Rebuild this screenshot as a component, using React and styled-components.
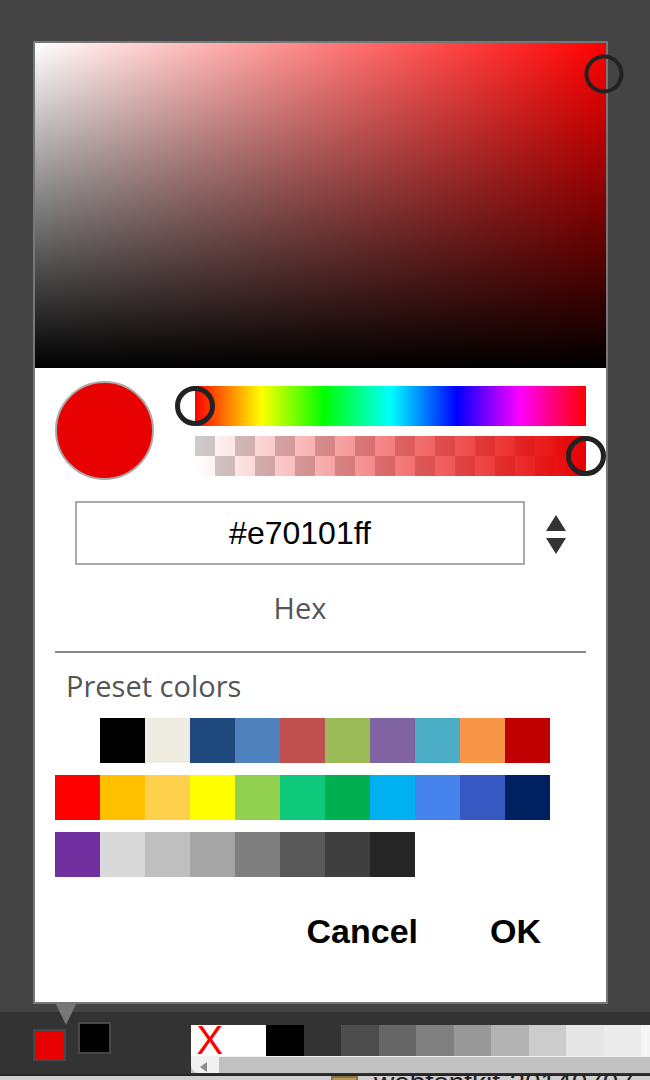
import React from "react";
import styled, { createGlobalStyle } from "styled-components";

const GlobalStyle = createGlobalStyle`
  * { box-sizing: border-box; }
  html, body { margin: 0; padding: 0; height: 100%; }
  body {
    background: #444444;
    font-family: "Liberation Sans", Arial, sans-serif;
    overflow: hidden;
  }
  #root { height: 100%; }
`;

// current colour in hsv, used to place the handles
const current = { h: 0, s: 0.996, v: 0.906, a: 1, hex: "#e70101ff", rgb: "#e70101" };

const presetColors = [
  null, "#000000", "#eeece1", "#1f497d", "#4f81bd", "#c0504d", "#9bbb59", "#8064a2", "#4bacc6", "#f79646", "#c00000",
  "#ff0000", "#ffc000", "#ffd04b", "#ffff00", "#92d050", "#0ec97b", "#00b050", "#00b0f0", "#4582ec", "#3558c3", "#002060",
  "#7030a0", "#d8d8d8", "#bfbfbf", "#a5a5a5", "#7f7f7f", "#595959", "#3f3f3f", "#262626",
];

const paletteColors = [
  "#ffffff", "#000000", "#333333", "#4d4d4d", "#666666", "#808080", "#999999",
  "#b3b3b3", "#cccccc", "#e6e6e6", "#ebebeb", "#f5f5f5",
];

const Page = styled.div`
  height: 100%;
  display: flex;
  flex-direction: column;
`;

const Stage = styled.div`
  flex: 1;
  padding: 41px 0 0 33px;
`;

const Popup = styled.div`
  position: relative;
  z-index: 2;
  width: 575px;
  height: 963px;
  background: #fff;
  border: 2px solid #777;
`;

const Pointer = styled.div`
  position: absolute;
  left: 20px;
  top: 100%;
  width: 0;
  height: 0;
  border-left: 11.5px solid transparent;
  border-right: 11.5px solid transparent;
  border-top: 23px solid #777;
`;

const SatArea = styled.div`
  position: relative;
  height: 325px;
  background: linear-gradient(to top, #000, rgba(0, 0, 0, 0)),
    linear-gradient(to right, #fff, hsl(${(p) => p.$hue}, 100%, 50%));
`;

const Ring = styled.div`
  position: absolute;
  width: ${(p) => p.$size}px;
  height: ${(p) => p.$size}px;
  border: ${(p) => p.$stroke}px solid #222;
  border-radius: 50%;
  transform: translate(-50%, -50%);
`;

const ControlsRow = styled.div`
  display: flex;
  align-items: center;
  padding: 13px 20px 0;
`;

const Preview = styled.div`
  width: 99px;
  height: 99px;
  border-radius: 50%;
  border: 2px solid #aaa;
  background: ${(p) => p.$color};
`;

const Bars = styled.div`
  margin-left: 41px;
  width: 391px;
  display: flex;
  flex-direction: column;
  gap: 10px;
`;

const HueBar = styled.div`
  position: relative;
  height: 40px;
  background: linear-gradient(to right, #f00 0%, #ff0 17%, #0f0 33%, #0ff 50%, #00f 67%, #f0f 83%, #f00 100%);
`;

const AlphaBar = styled.div`
  position: relative;
  height: 40px;
  background: linear-gradient(to right, rgba(231, 1, 1, 0), rgba(231, 1, 1, 1)),
    repeating-conic-gradient(#fff 0 25%, #cdcdcd 0 50%) 0 0 / 40px 40px;
`;

const HexRow = styled.div`
  display: flex;
  align-items: center;
  margin-top: 21px;
  padding-left: 40px;
`;

const HexInput = styled.input`
  width: 450px;
  height: 64px;
  border: 2px solid #aaa;
  outline: none;
  padding: 0;
  text-align: center;
  font-family: "Liberation Sans", Arial, sans-serif;
  font-size: 32px;
  color: #000;
  background: #fff;
`;

const Stepper = styled.div`
  margin: 3px 0 0 21px;
  display: flex;
  flex-direction: column;
  gap: 7px;
`;

const Arrow = styled.div`
  width: 0;
  height: 0;
  border-left: 10px solid transparent;
  border-right: 10px solid transparent;
  ${(p) => (p.$down ? "border-top: 16px solid #333;" : "border-bottom: 16px solid #333;")}
`;

const Label = styled.div`
  width: 450px;
  margin: 23px 0 0 40px;
  text-align: center;
  font-family: "Open Sans", sans-serif;
  font-size: 29px;
  line-height: 40px;
  color: #555;
`;

const Divider = styled.div`
  margin: 23px 20px 0;
  height: 2px;
  background: #888;
`;

const SectionTitle = styled.div`
  margin-top: 13px;
  padding-left: 31px;
  font-family: "Open Sans", sans-serif;
  font-size: 29px;
  line-height: 40px;
  color: #555;
`;

const SwatchGrid = styled.div`
  margin: 12px 0 0 20px;
  display: grid;
  grid-template-columns: repeat(11, 45px);
  grid-auto-rows: 45px;
  row-gap: 12px;
`;

const Swatch = styled.div`
  background: ${(p) => p.$color || "transparent"};
`;

const Actions = styled.div`
  display: flex;
  justify-content: flex-end;
  gap: 72px;
  margin-top: 35px;
  padding-right: 65px;
`;

const ActionButton = styled.button`
  border: none;
  background: none;
  padding: 0;
  font-family: "Liberation Sans", Arial, sans-serif;
  font-weight: bold;
  font-size: 34px;
  line-height: 38px;
  color: #000;
  cursor: pointer;
`;

const Toolbar = styled.div`
  height: 62px;
  background: #333;
  display: flex;
  align-items: flex-start;
  padding-left: 33px;
`;

const ColorChip = styled.div`
  width: 33px;
  height: 32px;
  margin-top: ${(p) => p.$top}px;
  margin-left: ${(p) => p.$left || 0}px;
  border: 2px solid #474747;
  background: ${(p) => p.$color};
`;

const Palette = styled.div`
  margin: 13px 0 0 80px;
  flex: 1;
  min-width: 0;
  display: flex;
  flex-direction: column;
`;

const PaletteRow = styled.div`
  display: flex;
  height: 31px;
`;

const PaletteCell = styled.div`
  flex: 0 0 37.5px;
  height: 31px;
  background: ${(p) => p.$color};
`;

const NoneCell = styled(PaletteCell)`
  background: #fff;
  color: #f00;
  font-family: "Liberation Sans", Arial, sans-serif;
  font-size: 40px;
  line-height: 31px;
  text-align: center;
`;

const ScrollRow = styled.div`
  display: flex;
  height: 17px;
  border-top: 1px solid #f0f0f0;
  background: #c1c1c1;
`;

const ScrollButton = styled.div`
  width: 28px;
  background: #f0f0f0;
  border-bottom-left-radius: 8px;
  display: flex;
  align-items: flex-end;
  padding: 0 0 1px 9px;
`;

const ScrollArrow = styled.div`
  width: 0;
  height: 0;
  border-top: 5px solid transparent;
  border-bottom: 5px solid transparent;
  border-right: 7px solid #8a8a8a;
`;

const FooterEdge = styled.div`
  height: 2px;
  background: #262626;
`;

const FooterStrip = styled.div`
  height: 4px;
  background: #cfcfcf;
  overflow: hidden;
  display: flex;
  align-items: flex-start;
`;

const FileIcon = styled.div`
  margin-left: 331px;
  width: 27px;
  height: 10px;
  background: #b59a55;
  border: 2px solid #8a7440;
  border-bottom: none;
`;

const FileName = styled.div`
  margin: -7px 0 0 16px;
  font-family: "Liberation Sans", Arial, sans-serif;
  font-size: 28px;
  line-height: 28px;
  color: #222;
  white-space: nowrap;
`;

export default function App() {
  return (
    <Page>
      <GlobalStyle />
      <Stage>
        <Popup>
          <SatArea $hue={current.h}>
            <Ring
              $size={39}
              $stroke={4}
              style={{ left: `${current.s * 100}%`, top: `${(1 - current.v) * 100}%` }}
            />
          </SatArea>

          <ControlsRow>
            <Preview $color={current.rgb} />
            <Bars>
              <HueBar>
                <Ring $size={40} $stroke={5} style={{ left: `${(current.h / 360) * 100}%`, top: "50%" }} />
              </HueBar>
              <AlphaBar>
                <Ring $size={40} $stroke={5} style={{ left: `${current.a * 100}%`, top: "50%" }} />
              </AlphaBar>
            </Bars>
          </ControlsRow>

          <HexRow>
            <HexInput defaultValue={current.hex} />
            <Stepper>
              <Arrow />
              <Arrow $down />
            </Stepper>
          </HexRow>
          <Label>Hex</Label>

          <Divider />
          <SectionTitle>Preset colors</SectionTitle>
          <SwatchGrid>
            {presetColors.map((c, i) => (
              <Swatch key={i} $color={c} />
            ))}
          </SwatchGrid>

          <Actions>
            <ActionButton>Cancel</ActionButton>
            <ActionButton>OK</ActionButton>
          </Actions>
          <Pointer />
        </Popup>
      </Stage>

      <Toolbar>
        <ColorChip $color="#e70000" $top={17} />
        <ColorChip $color="#000" $top={10} $left={12} />
        <Palette>
          <PaletteRow>
            <NoneCell>X</NoneCell>
            {paletteColors.map((c) => (
              <PaletteCell key={c} $color={c} />
            ))}
          </PaletteRow>
          <ScrollRow>
            <ScrollButton>
              <ScrollArrow />
            </ScrollButton>
          </ScrollRow>
        </Palette>
      </Toolbar>
      <FooterEdge />
      <FooterStrip>
        <FileIcon />
        <FileName>webfontkit-20140707</FileName>
      </FooterStrip>
    </Page>
  );
}
